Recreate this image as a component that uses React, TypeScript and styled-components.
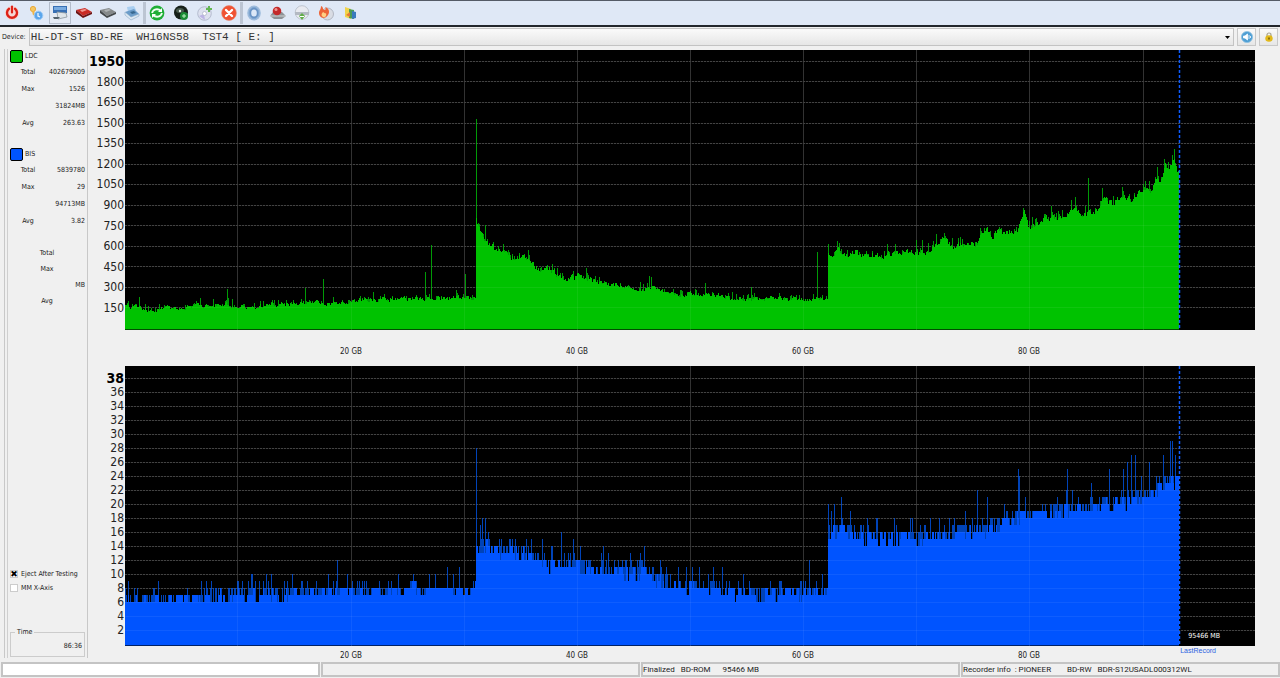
import { ReactNode } from 'react';
import styled, { createGlobalStyle } from 'styled-components';

type Point = [number, number];

interface Series {
  color: string;
  dim: string;
  max: number;
  unit: number;
  base: number;
  body: string;
  spikes: string;
}

const PLOT_WIDTH = 1130;
const PLOT_HEIGHT = 280;
const LAST_RECORD = 1054;

// LDC envelope: x and distance of the edge from the top of the plot
const LDC_EDGE: Point[] = [
  [0, 257], [12, 258], [25, 260], [35, 259], [75, 256], [100, 254], [107, 257],
  [135, 256], [175, 253], [205, 253], [240, 250], [275, 249], [350, 248],
  [351, 165], [353, 175], [356, 184], [361, 191], [365, 196], [370, 200],
  [382, 206], [390, 209], [398, 206], [412, 219], [424, 218], [435, 228],
  [465, 227], [472, 233], [495, 235], [515, 240], [530, 237], [543, 244],
  [575, 244], [603, 246], [605, 249], [695, 249], [702, 248], [703, 205],
  [713, 200], [717, 207], [731, 201], [735, 205], [758, 206], [765, 204],
  [802, 203], [807, 198], [817, 191], [828, 196], [852, 193], [857, 181],
  [862, 181], [867, 188], [873, 179], [878, 183], [892, 180], [899, 163],
  [903, 175], [913, 175], [920, 166], [925, 167], [935, 168], [948, 161],
  [958, 163], [967, 164], [973, 157], [978, 149], [987, 154], [995, 146],
  [1005, 151], [1015, 141], [1027, 142], [1030, 131], [1035, 132],
  [1040, 116], [1043, 123], [1049, 109], [1052, 119], [1054, 121],
];

const LDC_SPIKES: Point[] = [
  [14, 247], [102, 239], [180, 238], [198, 229], [300, 222], [306, 195],
  [340, 224], [351, 69], [360, 175], [461, 218], [524, 226], [526, 227],
  [580, 233], [626, 237], [692, 202], [703, 194], [762, 194], [791, 190],
  [926, 156], [950, 147], [963, 128], [977, 138], [1018, 134], [1039, 109],
  [1049, 99],
];

// BIS levels: x and average errors
const BIS_LEVEL: Point[] = [
  [0, 6.4], [158, 6.6], [165, 7.4], [350, 7.5], [351, 13.3], [362, 13.9],
  [370, 13], [395, 12.8], [410, 11.6], [435, 11], [465, 10.5], [495, 9.9],
  [525, 9.8], [540, 8.6], [565, 8.1], [595, 7.8], [605, 6.9], [675, 6.9],
  [702, 7.4], [703, 15.6], [720, 16.3], [735, 15.1], [775, 14.9], [805, 15.2],
  [845, 15.8], [865, 16.5], [885, 17.2], [905, 18.3], [935, 18.7],
  [965, 19], [985, 19.8], [1005, 20.3], [1025, 21.2], [1040, 22.6],
  [1054, 23.6],
];

const BIS_SPIKES: Point[] = [
  [146, 10], [167, 10], [203, 10], [212, 12], [222, 10], [322, 11], [334, 11],
  [351, 28], [355, 17], [357, 18], [360, 18], [376, 15], [387, 15], [401, 15],
  [417, 15], [436, 16], [448, 15], [455, 14], [478, 14], [519, 14], [535, 12],
  [574, 11], [684, 12], [703, 20], [706, 19], [709, 20], [716, 21], [752, 18],
  [769, 18], [785, 18], [800, 17], [824, 18], [852, 22], [862, 21], [893, 25],
  [894, 24], [942, 25], [947, 22], [966, 23], [984, 25], [998, 25], [1002, 26],
  [1006, 27], [1010, 27], [1024, 26], [1038, 27], [1045, 29], [1047, 29],
  [1050, 27],
];

const interpolate = (points: Point[], x: number) => {
  const next = points.findIndex((point) => point[0] >= x);
  if (next <= 0) return points[0][1];
  const [x0, y0] = points[next - 1];
  const [x1, y1] = points[next];
  return y0 + ((y1 - y0) * (x - x0)) / (x1 - x0);
};

const createRandom = (seed: number) => () => {
  seed = (seed * 16807) % 2147483647;
  return seed / 2147483647;
};

const columnPath = (tops: number[]) =>
  `M0 279${tops.map((top, x) => `V${top}H${x + 1}`).join('')}V279Z`;

const spikePath = (points: Point[]) =>
  points.map(([x, y]) => `M${x} 279V${y}h1V279Z`).join('');

const buildLdc = () => {
  const random = createRandom(77);
  const tops: number[] = [];
  const spikes: Point[] = [...LDC_SPIKES];
  let drift = 0;
  for (let x = 0; x < LAST_RECORD; x++) {
    const level = interpolate(LDC_EDGE, x);
    const noise = level < 232 ? 6 : 4;
    drift = drift * 0.5 + (random() - 0.5) * noise;
    const edge = Math.round(level + drift);
    tops.push(edge);
    if (random() > 0.6) {
      spikes.push([x, edge - Math.round(random() * random() * noise * 2)]);
    }
  }
  return { body: columnPath(tops), spikes: spikePath(spikes) };
};

const buildBis = () => {
  const random = createRandom(4211);
  const tops: number[] = [];
  const toY = (errors: number) => 278 - errors * 7;
  const spikes: Point[] = BIS_SPIKES.map(([x, errors]) => [x, toY(errors)]);
  let drift = 0;
  for (let x = 0; x < LAST_RECORD; x++) {
    if (random() > 0.45) drift = random() * 2 - 0.9;
    const mean = interpolate(BIS_LEVEL, x);
    const level = Math.round(mean + drift);
    tops.push(toY(level));
    const roll = random();
    if (roll > 0.45) {
      const rise = roll > 0.97 ? 3 : roll > 0.87 ? 2 : 1;
      spikes.push([x, toY(Math.round(mean) + rise)]);
    }
  }
  return { body: columnPath(tops), spikes: spikePath(spikes) };
};

const LDC: Series = {
  color: '#00c200',
  dim: '#009a06',
  max: 1950,
  unit: 150,
  base: 278,
  ...buildLdc(),
};

const BIS: Series = {
  color: '#0054ff',
  dim: '#0043b8',
  max: 38,
  unit: 2,
  base: 278,
  ...buildBis(),
};

const GB_LABELS = ['20 GB', '40 GB', '60 GB', '80 GB'];

const ticks = ({ max, unit }: Series) =>
  Array.from({ length: max / unit }, (_, index) => max - index * unit);

function Chart({ series, step, name }: { series: Series; step: number; name: string }) {
  const rows = ticks(series).map((_, index) => Math.round(series.base - (index + 1) * step));
  const horizontal = rows.map((y) => `M0 ${y}.5H${PLOT_WIDTH}`).join('');
  const vertical = [112, 226, 339, 452, 565, 678, 791, 904, 1018]
    .map((x) => `M${x}.5 0V${PLOT_HEIGHT}`)
    .join('');
  return (
    <ChartSvg
      viewBox={`0 0 ${PLOT_WIDTH} ${PLOT_HEIGHT}`}
      preserveAspectRatio='none'
      shapeRendering='crispEdges'
      role='img'
      aria-label={name}
    >
      <path d={horizontal} stroke='#383838' strokeDasharray='2 1' />
      <path d={vertical} stroke='#262626' />
      <path d={series.spikes} fill={series.dim} />
      <path d={series.body} fill={series.color} />
      <path d={horizontal} stroke='#fff' strokeOpacity='.06' />
      <path d={vertical} stroke='#fff' strokeOpacity='.06' />
      <path d={`M0 279.5H${LAST_RECORD}`} stroke={series.color} strokeOpacity='.4' />
      <path
        d={`M${LAST_RECORD}.5 0V${PLOT_HEIGHT}`}
        stroke='#0f5cff'
        strokeWidth='1.500'
        strokeDasharray='3 2'
        shapeRendering='auto'
      />
    </ChartSvg>
  );
}

const icons: Record<string, ReactNode> = {
  Exit: (
    <>
      <circle cx='8' cy='8' r='7' fill='#f5d6d3' />
      <path d='M5 3.8a5 5 0 1 0 6 0' fill='none' stroke='#dd2218' strokeWidth='2.4' strokeLinecap='round' />
      <path d='M8 1.5v6' stroke='#dd2218' strokeWidth='2.2' strokeLinecap='round' />
    </>
  ),
  Settings: (
    <>
      <circle cx='5' cy='4' r='2.6' fill='#f6c863' stroke='#e8a93a' />
      <path d='M5 6l1 4' stroke='#f0b548' strokeWidth='2' />
      <circle cx='10.5' cy='10.5' r='4.3' fill='#5aa5ec' stroke='#9ccaf5' />
      <path d='M10 8v3l2 1' fill='none' stroke='#e9f5ff' strokeWidth='1.3' />
    </>
  ),
  Drive: (
    <>
      <path d='M1 1h14v7H1z' fill='#376fb4' />
      <path d='M2 2h12v3H2z' fill='#79abe0' />
      <path d='M5 7l9 1 1 4-9 2z' fill='#dfe5e9' stroke='#8a959d' strokeWidth='.8' />
      <path d='M1 12h7l-2 2H2z' fill='#53616c' />
    </>
  ),
  'Red book': (
    <>
      <path d='M0 5l9-2 7 4-9 4z' fill='#c92a24' />
      <path d='M0 5v3l7 5 9-4V7l-9 4z' fill='#6d1313' />
      <path d='M4 5l5-1 2 1-5 2z' fill='#f09a91' />
    </>
  ),
  'Gray book': (
    <>
      <path d='M0 5l9-2 7 4-9 4z' fill='#85898a' />
      <path d='M0 5v3l7 5 9-4V7l-9 4z' fill='#45494b' />
      <path d='M4 5l5-1 2 1-5 2z' fill='#afb3b4' />
    </>
  ),
  Print: (
    <>
      <path d='M3 2l7-1 2 4-8 2z' fill='#a9cef0' />
      <path d='M1 7l9-3 5 5-8 4z' fill='#6b9cc9' />
      <path d='M1 7v3l6 5 8-4V9l-8 3z' fill='#dde8f2' stroke='#8aa9c6' strokeWidth='.6' />
      <path d='M6 7l4-1 2 2-4 1z' fill='#37678f' />
    </>
  ),
  Refresh: (
    <>
      <circle cx='8' cy='8' r='7.4' fill='#1fae35' />
      <path d='M3 8c1-4 6-5 9-2M13 8c-1 4-6 5-9 2' fill='none' stroke='#effff0' strokeWidth='1.800' />
      <path d='M13 3v4H9zM3 13V9h4z' fill='#fff' />
    </>
  ),
  'Surface scan': (
    <>
      <circle cx='8' cy='7.5' r='7' fill='#172019' />
      <ellipse cx='7' cy='5.5' rx='4' ry='2.5' fill='#47584b' />
      <circle cx='7' cy='6' r='1.2' fill='#e8efe9' />
      <circle cx='11' cy='11' r='4' fill='#1b8b34' />
      <path d='M11 9v4M9 11h4' stroke='#b9f0bf' />
    </>
  ),
  'Write disc': (
    <>
      <circle cx='7.5' cy='8.5' r='6.8' fill='#dde1ef' stroke='#aab1c5' strokeWidth='.8' />
      <path d='M2 11l5-2 1 6z' fill='#bdb3e5' />
      <circle cx='7.5' cy='8.5' r='2' fill='#fff' stroke='#aab1c5' strokeWidth='.7' />
      <path d='M12 1v6M9 4h6' stroke='#64b753' strokeWidth='2' />
    </>
  ),
  Stop: (
    <>
      <circle cx='8' cy='8' r='7.4' fill='#f05233' stroke='#e48a72' strokeWidth='.6' />
      <path d='M5 5l6 6M11 5l-6 6' stroke='#fff' strokeWidth='2.4' strokeLinecap='round' />
    </>
  ),
  'Disc info': (
    <>
      <ellipse cx='8' cy='8' rx='6.8' ry='7.600' fill='#9dbbdc' />
      <ellipse cx='8' cy='8' rx='4.8' ry='5.6' fill='#6792c4' stroke='#7ea5d0' />
      <ellipse cx='8' cy='8' rx='2.800' ry='3.600' fill='#dce8f7' />
    </>
  ),
  'Drive alarm': (
    <>
      <path d='M0 11l3-4h9l4 4-4 3H4z' fill='#8d9296' />
      <path d='M0 11h16' stroke='#d0d4d6' />
      <circle cx='7' cy='6' r='4.3' fill='#c42a2b' />
      <circle cx='6' cy='4.6' r='1.5' fill='#ed9692' />
    </>
  ),
  'Eject disc': (
    <>
      <circle cx='8' cy='7.5' r='6.800' fill='#e8eaf0' stroke='#b4bac4' strokeWidth='.8' />
      <path d='M1 7h14v3H1z' fill='#b3b9c2' />
      <path d='M5 11l3-3 3 3-3 4z' fill='#60ad48' />
      <path d='M6 11.500h4' stroke='#fff' />
    </>
  ),
  'Burn disc': (
    <>
      <circle cx='9.500' cy='9' r='6' fill='#d9dce4' stroke='#a6abb6' strokeWidth='.8' />
      <path d='M3 1c3 1 1 4 4 4 1-1 1-2 0-3 4 1 5 5 3 8-3 5-9 3-9-2 0-3 2-3 2-7z' fill='#ed6438' />
      <path d='M5 7c2 1 2 2 3 1 1 3-1 5-3 4S3 9 5 7z' fill='#ffd083' />
    </>
  ),
  Report: (
    <>
      <path d='M3 2l6 2v10l-6-2z' fill='#f0d34a' />
      <path d='M7 4l5 1v9l-5-1z' fill='#4b9b54' />
      <path d='M10 6l4 1v6l-4 1z' fill='#397abd' />
      <path d='M4 10l4-3v5z' fill='#e57936' />
    </>
  ),
};

const TOOL_GROUPS = [
  ['Exit', 'Settings', 'Drive', 'Red book', 'Gray book', 'Print'],
  ['Refresh', 'Surface scan', 'Write disc', 'Stop'],
  ['Disc info', 'Drive alarm', 'Eject disc', 'Burn disc', 'Report'],
];

const STATS = [
  { name: 'LDC', color: LDC.color, total: '402679009', max: '1526', at: '31824MB', avg: '263.63' },
  { name: 'BIS', color: BIS.color, total: '5839780', max: '29', at: '94713MB', avg: '3.82' },
];

export default function App() {
  return (
    <Page>
      <GlobalStyle />
      <Toolbar>
        {TOOL_GROUPS.map((group) => (
          <ToolGroup key={group[0]}>
            {group.map((name) => (
              <ToolButton key={name} aria-label={name} $pressed={name === 'Drive'}>
                <svg width='16' height='16' viewBox='0 0 16 16'>
                  {icons[name]}
                </svg>
              </ToolButton>
            ))}
          </ToolGroup>
        ))}
      </Toolbar>

      <DeviceBar>
        <label htmlFor='device'>Device:</label>
        <SelectBox>
          <DeviceSelect id='device'>
            <option>{'HL-DT-ST BD-RE\u00a0 WH16NS58\u00a0 TST4 [ E: ]'}</option>
          </DeviceSelect>
          <SelectArrow viewBox='0 0 5 3'>
            <path d='M0 0h5L2.500 3z' fill='#000' />
          </SelectArrow>
        </SelectBox>
        <SmallButton aria-label='Sound'>
          <svg width='12' height='12' viewBox='0 0 12 12'>
            <circle cx='6' cy='6' r='5.600' fill='#4f9fd4' stroke='#8fc1e2' strokeWidth='.8' />
            <path d='M2.500 5h1.500l2.500-2v6L4 7H2.500zM8 4v4M9.500 5v2' fill='#fff' stroke='#fff' strokeWidth='.8' />
          </svg>
        </SmallButton>
        <SmallButton aria-label='Lock'>
          <svg width='12' height='12' viewBox='0 0 12 12'>
            <path d='M4 6V4a2 2 0 0 1 4 0v2' fill='none' stroke='#a5a28c' strokeWidth='1.200' />
            <ellipse cx='6' cy='7.500' rx='3.700' ry='3.200' fill='#e2b91b' />
            <path d='M6 6.500v2' stroke='#564706' strokeWidth='1.200' />
          </svg>
        </SmallButton>
      </DeviceBar>

      <Content>
        <Sidebar>
          <SidebarPanel>
            {STATS.map((stat) => (
              <StatGroup key={stat.name}>
                <StatTitle>
                  <Swatch $color={stat.color} />
                  {stat.name}
                </StatTitle>
                <StatList>
                  <dt>Total</dt>
                  <dd>{stat.total}</dd>
                  <dt>Max</dt>
                  <dd>{stat.max}</dd>
                  <dt />
                  <dd>{stat.at}</dd>
                  <dt>Avg</dt>
                  <dd>{stat.avg}</dd>
                </StatList>
              </StatGroup>
            ))}
            <StatList $empty>
              <dt>Total</dt>
              <dd />
              <dt>Max</dt>
              <dd />
              <dt />
              <dd>MB</dd>
              <dt>Avg</dt>
              <dd />
            </StatList>

            <Options>
              <Option>
                <CheckBox type='checkbox' defaultChecked />
                Eject After Testing
              </Option>
              <Option>
                <CheckBox type='checkbox' />
                MM X-Axis
              </Option>
            </Options>

            <TimeBox>
              <legend>Time</legend>
              86:36
            </TimeBox>
          </SidebarPanel>
        </Sidebar>

        <Charts>
          <Scale $top={1} $bottom={12}>
            {ticks(LDC).map((tick) => (
              <span key={tick}>{tick}</span>
            ))}
          </Scale>
          <Plot>
            <Chart series={LDC} step={20.55} name='LDC errors' />
          </Plot>
          <Axis $top={17}>
            {GB_LABELS.map((label) => (
              <span key={label}>{label}</span>
            ))}
          </Axis>
          <Scale $top={5} $bottom={9}>
            {ticks(BIS).map((tick) => (
              <span key={tick}>{tick}</span>
            ))}
          </Scale>
          <Plot>
            <Chart series={BIS} step={14} name='BIS errors' />
            <Capacity>95466 MB</Capacity>
            <LastRecord>LastRecord</LastRecord>
          </Plot>
          <Axis $top={5}>
            {GB_LABELS.map((label) => (
              <span key={label}>{label}</span>
            ))}
          </Axis>
        </Charts>
      </Content>

      <StatusBar>
        <StatusField $white />
        <StatusField />
        <StatusField>
          <span>Finalized</span>
          <span>BD-ROM</span>
          <StatusValue>95466 MB</StatusValue>
        </StatusField>
        <StatusField>
          <StatusName>Recorder info&nbsp; : PIONEER</StatusName>
          <span>BD-RW</span>
          <span>BDR-S12USADL000312WL</span>
        </StatusField>
      </StatusBar>
    </Page>
  );
}

const GlobalStyle = createGlobalStyle`
  * {
    box-sizing: border-box;
  }

  body {
    margin: 0;
    background: #f0f0f0;
  }
`;

const Page = styled.div`
  display: grid;
  grid-template-rows: auto auto minmax(0, 1fr) auto;
  height: 100vh;
  min-height: 600px;
  overflow: hidden;
  color: #222;
  font-family: 'DejaVu Sans Condensed', 'DejaVu Sans', sans-serif;
  font-size: 7px;
  line-height: 10px;
`;

const Toolbar = styled.div`
  display: flex;
  height: 27px;
  padding: 1px;
  background: #dfe8f6;
  border-top: 1px solid #555b66;
  border-bottom: 2px solid #22262b;
`;

const ToolGroup = styled.div`
  display: flex;
  align-items: center;
  gap: 2px;

  & + & {
    border-left: 3px solid #bcc5d3;
  }
`;

const ToolButton = styled.button<{ $pressed?: boolean }>`
  display: flex;
  align-items: center;
  justify-content: center;
  width: 22px;
  height: 22px;
  padding: 0;
  background: ${(props) => (props.$pressed ? '#e4eaf4' : 'transparent')};
  border: 1px solid ${(props) => (props.$pressed ? '#b4bdcb' : 'transparent')};
`;

const DeviceBar = styled.div`
  display: flex;
  align-items: center;
  gap: 3px;
  height: 22px;
  padding: 0 2px 2px;
`;

const SelectBox = styled.div`
  position: relative;
  flex: 1;
  height: 18px;
`;

const DeviceSelect = styled.select`
  appearance: none;
  display: block;
  width: 100%;
  height: 100%;
  padding: 0 1px;
  color: #333;
  font-family: 'Liberation Mono', monospace;
  font-size: 11px;
  background: linear-gradient(#fafafa, #e6e6e6);
  border: 1px solid #c3c3c3;
  border-radius: 0;
`;

const SelectArrow = styled.svg`
  position: absolute;
  top: 8px;
  right: 4px;
  width: 5px;
  height: 3px;
  pointer-events: none;
`;

const SmallButton = styled.button`
  display: flex;
  align-items: center;
  justify-content: center;
  width: 19px;
  height: 18px;
  padding: 0;
  background: linear-gradient(#fafafa, #e6e6e6);
  border: 1px solid #c8c8c8;
`;

const Content = styled.div`
  display: grid;
  grid-template-columns: 88px minmax(0, 1fr);
  min-height: 0;
`;

const Sidebar = styled.aside`
  padding-left: 4px;
`;

const SidebarPanel = styled.div`
  display: flex;
  flex-direction: column;
  height: 100%;
  padding: 0 2px 1px 5px;
  border-left: 1px solid #c8c8c8;
  border-right: 1px solid #c8c8c8;
  box-shadow: inset 2px 0 #f0f0f0, inset 3px 0 #cfcfcf;
`;

const StatGroup = styled.section`
  margin-bottom: 16px;
`;

const StatTitle = styled.h2`
  display: flex;
  align-items: center;
  gap: 2px;
  height: 14px;
  margin: 0;
  font-size: 7px;
  font-weight: 400;
`;

const Swatch = styled.span<{ $color: string }>`
  width: 13px;
  height: 13px;
  background: ${(props) => props.$color};
  border: 1px solid #000;
  border-radius: 2px;
`;

const StatList = styled.dl<{ $empty?: boolean }>`
  display: grid;
  grid-template-columns: ${(props) => (props.$empty ? '74px' : '36px')} minmax(0, 1fr);
  grid-auto-rows: ${(props) => (props.$empty ? 16 : 17)}px;
  align-items: center;
  margin: 0;

  & dt {
    text-align: center;
  }

  & dd {
    display: flex;
    justify-content: flex-end;
    margin: 0;
  }
`;

const Options = styled.div`
  margin-top: auto;
`;

const Option = styled.label`
  display: flex;
  align-items: center;
  gap: 3px;
  height: 14px;
  white-space: nowrap;
`;

const CheckBox = styled.input`
  appearance: none;
  display: flex;
  align-items: center;
  justify-content: center;
  width: 8px;
  height: 8px;
  margin: 0;
  color: #000;
  background: #fff;
  border: 1px solid #ccc;

  &:checked::before {
    content: '✖';
    font-family: 'DejaVu Sans', sans-serif;
    font-size: 9px;
  }
`;

const TimeBox = styled.fieldset`
  margin: 32px 0 0;
  padding: 4px 2px 5px;
  text-align: right;
  border: 1px solid #ccc;

  & legend {
    margin-left: 2px;
    padding: 0 2px;
    text-align: left;
  }
`;

const Charts = styled.main`
  display: grid;
  grid-template-columns: 37px minmax(0, 1fr);
  grid-template-rows: minmax(0, 1fr) 36px minmax(0, 1fr) 12px;
  min-height: 0;
  padding: 1px 25px 0 0;
`;

const Scale = styled.div<{ $top: number; $bottom: number }>`
  display: grid;
  grid-template-columns: minmax(0, 1fr);
  grid-auto-rows: minmax(0, 1fr);
  align-items: center;
  justify-items: end;
  padding: ${(props) => `${props.$top}px 1px ${props.$bottom}px 0`};
  font-size: 12px;
  line-height: 14px;

  & span:first-child {
    color: #000;
    font-size: 14px;
    font-weight: 700;
  }
`;

const Plot = styled.div`
  position: relative;
  min-height: 0;
  background: #000;
`;

const ChartSvg = styled.svg`
  display: block;
  width: 100%;
  height: 100%;
`;

const Axis = styled.div<{ $top: number }>`
  grid-column: 2;
  display: grid;
  grid-template-columns: repeat(4, 20%);
  justify-content: center;
  padding-top: ${(props) => props.$top}px;
  overflow: hidden;
  text-align: center;
  font-size: 8px;
`;

const Capacity = styled.span`
  position: absolute;
  right: 35px;
  bottom: 5px;
  color: #fff;
`;

const LastRecord = styled.span`
  position: absolute;
  top: 100%;
  right: 39px;
  color: #2d62e0;
  font-family: 'Liberation Sans', sans-serif;
`;

const StatusBar = styled.footer`
  display: grid;
  grid-template-columns: repeat(4, minmax(0, 1fr));
  gap: 1px;
  height: 20px;
  padding: 4px 0 0 1px;
  background: #f0f0f0;
`;

const StatusField = styled.div<{ $white?: boolean }>`
  display: flex;
  align-items: center;
  gap: 6px;
  height: 15px;
  font-family: Roboto, sans-serif;
  font-size: 8px;
  white-space: pre;
  background: ${(props) => (props.$white ? '#fff' : '#f0f0f0')};
  border: 2px solid #c4c4c4;
`;

const StatusValue = styled.span`
  margin-left: 6px;
`;

const StatusName = styled.span`
  margin-right: 10px;
`;
